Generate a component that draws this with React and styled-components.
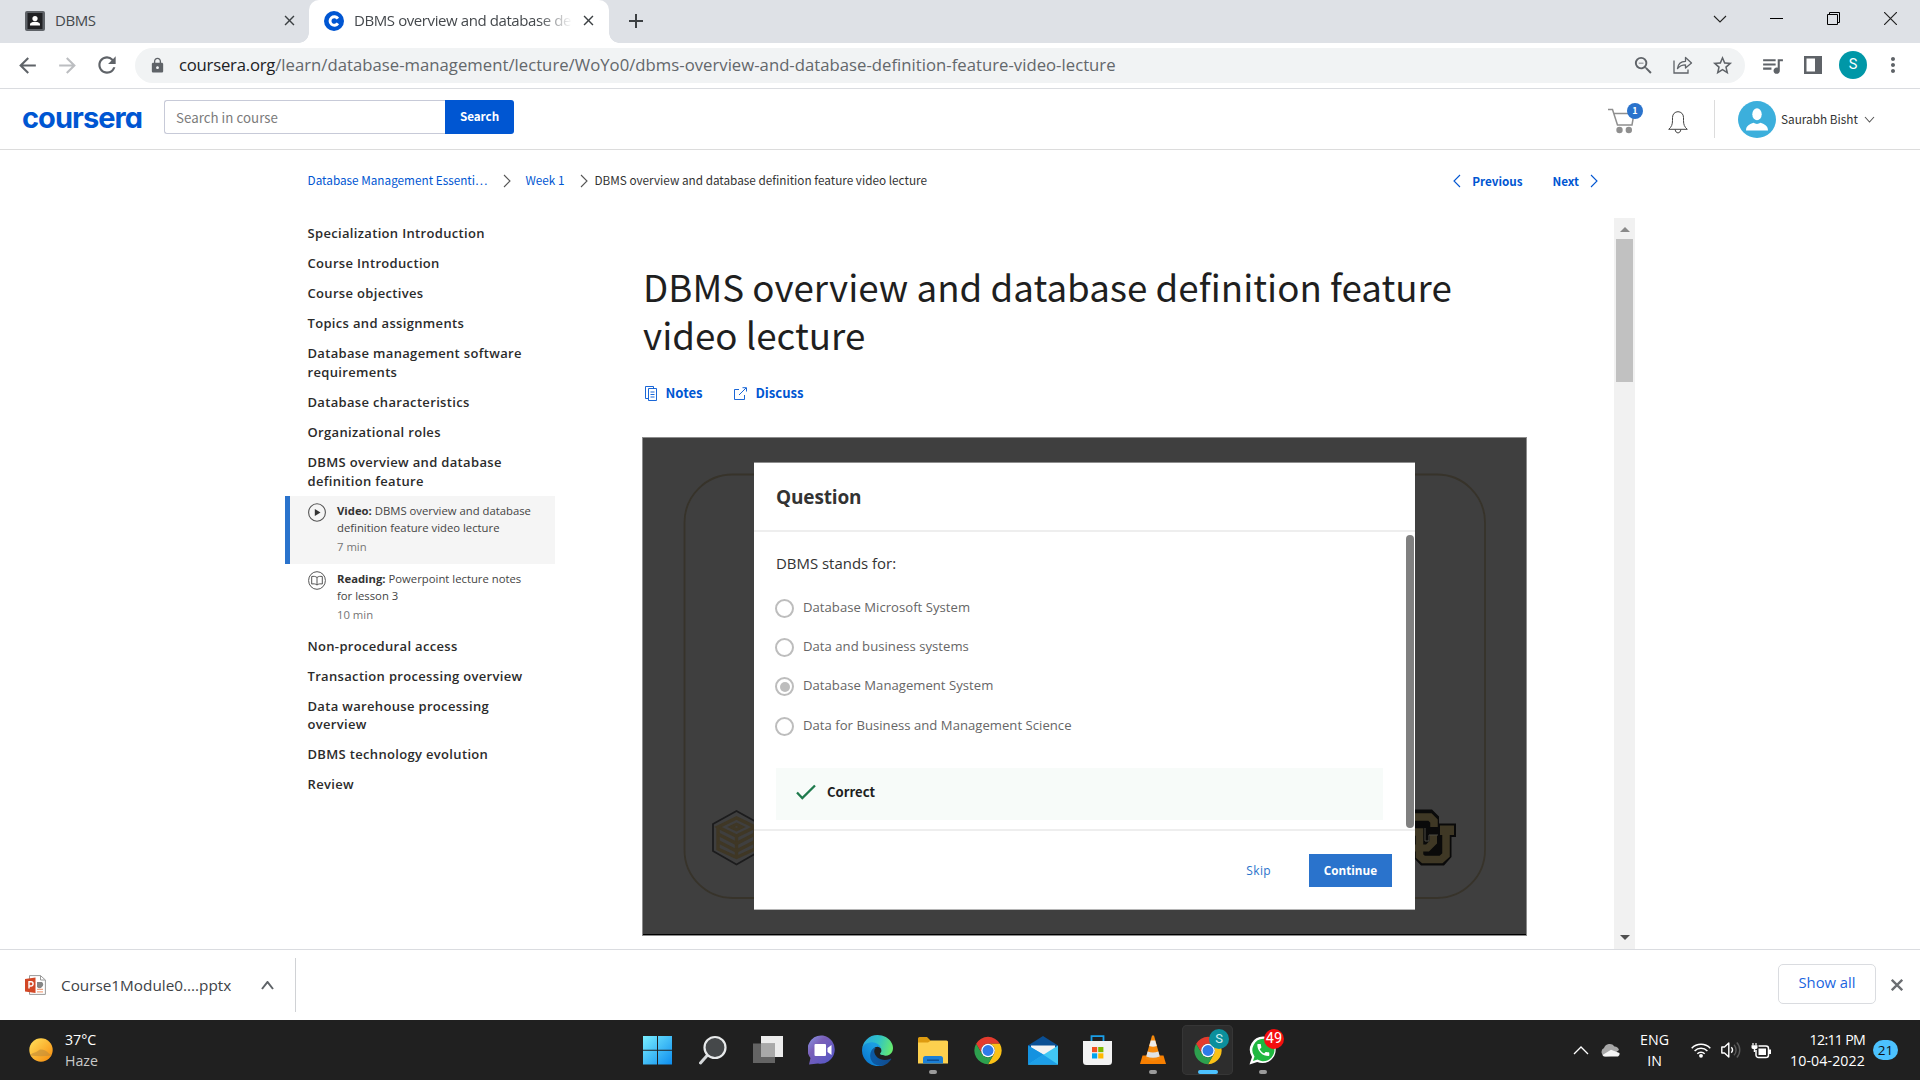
import React from "react";
import styled, { createGlobalStyle, css } from "styled-components";
import {
  MdArrowBack, MdArrowForward, MdRefresh, MdLock, MdClose, MdAdd, MdStarBorder, MdZoomOut,
  MdQueueMusic, MdMoreVert, MdPhone,
} from "react-icons/md";

const OPEN = '"Open Sans", "Noto Sans", sans-serif';
const SOURCE = '"Noto Sans CJK SC", "Open Sans", sans-serif';
const BLUE = "#0056d2";

const type = (size, line, weight = 400, family = OPEN, spacing = 0) => css`
  font: ${weight} ${size}px/${line}px ${family};
  letter-spacing: ${spacing}px;
  white-space: nowrap;
`;

const GlobalStyle = createGlobalStyle`
  *, *::before, *::after { box-sizing: border-box; }
  html, body { margin: 0; height: 100%; overflow: hidden; background: #fff; }
  svg { display: block; flex: none; }
`;

const Screen = styled.div`
  display: flex;
  flex-direction: column;
  width: 1920px;
  height: 1080px;
  background: #fff;
  font-family: ${OPEN};
`;

/* ---------- browser chrome ---------- */

const TabStrip = styled.div`
  display: flex;
  flex: none;
  height: 43px;
  background: #dee1e6;
`;
const Tab = styled.div`
  display: flex;
  align-items: center;
  flex: none;
  width: ${(p) => p.$width}px;
  padding: 0 ${(p) => p.$right}px 2px ${(p) => p.$left}px;
  position: relative;
  ${(p) =>
    p.$active &&
    css`
      background: #fff;
      border-radius: 10px 10px 0 0;
      &::before,
      &::after {
        content: "";
        position: absolute;
        bottom: 0;
        width: 10px;
        height: 10px;
      }
      &::before {
        left: -10px;
        background: radial-gradient(circle at 0 0, transparent 9.5px, #fff 10px);
      }
      &::after {
        right: -10px;
        background: radial-gradient(circle at 100% 0, transparent 9.5px, #fff 10px);
      }
    `}
`;
const TabTitle = styled.span`
  ${type(15, 20, 400, OPEN, -0.41)}
  flex: 1;
  min-width: 0;
  margin: -1px 0 0 10px;
  overflow: hidden;
  color: #45494d;
  ${(p) => p.$fade && css`
    mask-image: linear-gradient(90deg, #000 185px, transparent 218px);
  `}
`;
const NewTab = styled.div`
  display: flex;
  align-items: center;
  padding: 0 0 1px 15px;
`;
const WindowControls = styled.div`
  display: flex;
  align-items: center;
  margin: 0 1px 0 auto;
  height: 37px;
`;
const WindowButton = styled.div`
  display: grid;
  place-items: center;
  width: 57px;
  height: 37px;
`;

const Toolbar = styled.div`
  display: flex;
  align-items: center;
  flex: none;
  height: 46px;
  padding: 0 15px 1px 7px;
  border-bottom: 1px solid #dadce0;
  color: #5f6368;
`;
const NavButton = styled.div`
  display: grid;
  place-items: center;
  flex: none;
  width: 40px;
  margin-left: ${(p) => p.$offset || 0}px;
  color: ${(p) => (p.$dim ? "#bcbec1" : "#5f6368")};
`;
const Omnibox = styled.div`
  display: flex;
  align-items: center;
  flex: none;
  width: 1610px;
  height: 35px;
  margin-left: 8px;
  padding: 0 11px 0 14px;
  border-radius: 18px;
  background: #f1f3f4;
`;
const Url = styled.span`
  ${type(16.7, 24, 400, OPEN, 0.02)}
  flex: 1;
  margin-left: 13px;
  color: #63676b;
`;
const UrlHost = styled.span`
  letter-spacing: -0.22px;
  color: #202124;
`;
const OmniActions = styled.div`
  display: flex;
  align-items: center;
  gap: 18px;
`;
const ToolbarActions = styled.div`
  display: flex;
  align-items: center;
  margin-left: 15px;
`;
const ProfileBadge = styled.div`
  ${type(14.5, 28, 400, "Roboto, sans-serif")}
  width: 28px;
  height: 28px;
  margin: 0 14px 0 6px;
  border-radius: 50%;
  background: #0097a7;
  color: #fff;
  text-align: center;
`;

/* ---------- site header ---------- */

const SiteHeader = styled.header`
  display: flex;
  flex: none;
  height: 61px;
  padding: 11px 45px 0 22px;
  border-bottom: 1px solid #dcdcdc;
`;
const Logo = styled.div`
  ${type(29, 34, 700, "Inter, sans-serif", -0.95)}
  font-feature-settings: "cv11";
  width: 142px;
  margin-top: 1px;
  color: ${BLUE};
`;
const SearchForm = styled.div`
  display: flex;
  width: 350px;
  height: 34px;
`;
const SearchField = styled.div`
  ${type(13.3, 34, 400, SOURCE, 0.03)}
  width: 281px;
  padding-left: 11px;
  border: 1px solid #c7cad8;
  border-right: 0;
  border-radius: 3px 0 0 3px;
  color: #7b7b7b;
`;
const SearchButton = styled.div`
  ${type(11.7, 31, 700, SOURCE, -0.05)}
  width: 69px;
  border-radius: 0 3px 3px 0;
  background: ${BLUE};
  color: #fff;
  text-align: center;
`;
const HeaderActions = styled.div`
  display: flex;
  align-items: flex-start;
  margin-left: auto;
`;
const CartButton = styled.div`
  position: relative;
  width: 60px;
  padding-top: 8px;
`;
const CartCount = styled.span`
  ${type(9, 16, 700, SOURCE)}
  position: absolute;
  left: 19px;
  top: 3px;
  width: 16px;
  height: 16px;
  border-radius: 50%;
  background: #2a73cc;
  color: #fff;
  text-align: center;
`;
const BellButton = styled.div`
  width: 46px;
  padding-top: 11px;
`;
const Account = styled.div`
  display: flex;
  align-items: center;
  height: 38px;
  padding-left: 23px;
  border-left: 1px solid #dcdcdc;
`;
const AccountName = styled.span`
  ${type(11.8, 20, 400, SOURCE)}
  width: 83px;
  margin: -1px 0 0 5px;
  color: #333;
`;

/* ---------- lecture page ---------- */

const PageBody = styled.div`
  display: flex;
  flex-direction: column;
  flex: none;
  height: 799px;
`;
const CrumbBar = styled.nav`
  display: flex;
  align-items: center;
  flex: none;
  height: 68px;
  padding: 0 322px 6px 307.6px;
`;
const Crumb = styled.span`
  ${type(11.75, 20, 400, SOURCE)}
  margin: -2px ${(p) => p.$gap || 0}px 0 ${(p) => p.$before || 0}px;
  color: ${(p) => (p.$link ? BLUE : "#333")};
`;
const StepLink = styled.span`
  ${type(11.7, 20, 700, SOURCE)}
  display: flex;
  align-items: center;
  gap: ${(p) => p.$gap}px;
  margin-left: ${(p) => p.$before};
  color: ${BLUE};
`;
const Columns = styled.div`
  display: flex;
  flex: 1;
  min-height: 0;
`;
const Sidebar = styled.aside`
  width: 270px;
  margin-left: 285px;
`;
const Section = styled.div`
  ${type(13, 19, 600, OPEN, 0.33)}
  line-height: ${(p) => p.$line}px;
  padding: ${(p) => (30 - p.$line) / 2}px 0 ${(p) => (30 - p.$line) / 2}px 22.5px;
  color: #2b2b2b;
`;
const Lesson = styled.div`
  display: flex;
  height: 67.5px;
  padding: 7px 0 0 17.5px;
  border-left: 5px solid ${(p) => (p.$active ? "#2a73cc" : "transparent")};
  background: ${(p) => (p.$active ? "#f5f5f5" : "transparent")};
`;
const LessonText = styled.div`
  ${type(11.3, 17, 400, OPEN)}
  margin: -1px 0 0 11.5px;
  color: #444;
  b {
    font-weight: 700;
    color: #333;
  }
`;
const Duration = styled.div`
  margin-top: 2px;
  color: #757575;
`;
const Content = styled.main`
  display: flex;
  flex-direction: column;
  width: 885px;
  margin-left: 87px;
  padding-top: 44px;
`;
const Title = styled.h1`
  ${type(36.73, 48, 400, SOURCE)}
  margin: 0 0 0 1px;
  height: 96px;
  color: #1f1f1f;
`;
const LectureActions = styled.div`
  display: flex;
  align-items: center;
  height: 24px;
  margin: 23px 0 0 2.5px;
`;
const ActionLink = styled.div`
  ${type(13.1, 20, 700, SOURCE)}
  display: flex;
  align-items: center;
  gap: 9px;
  width: 89px;
  color: ${BLUE};
`;
const Player = styled.div`
  display: grid;
  grid-template: 499px / 885px;
  margin-top: 32px;
`;
const Slide = styled.div`
  grid-area: 1 / 1;
  border: 1px solid #8c8c8c;
  background: #3f3f3f;
`;
const Modal = styled.section`
  display: flex;
  flex-direction: column;
  grid-area: 1 / 1;
  z-index: 1;
  align-self: start;
  justify-self: start;
  width: 661px;
  height: 448px;
  margin: 25px 0 0 112px;
  border-top: 1px solid #8e8e8e;
  border-bottom: 1px solid #b5b5b5;
  background: #fff;
`;
const ModalHeader = styled.div`
  ${type(19, 26, 700, OPEN, -0.15)}
  flex: none;
  height: 69px;
  padding: 21px 0 0 22px;
  border-bottom: 2px solid #eee;
  color: #333;
`;
const ModalBody = styled.div`
  display: flex;
  flex: none;
  height: 297px;
`;
const Quiz = styled.div`
  width: 607px;
  margin-left: 22px;
`;
const Prompt = styled.div`
  ${type(14.95, 22, 400, OPEN)}
  padding-top: 20px;
  height: 56px;
  color: #333;
`;
const Option = styled.label`
  ${type(13.1, 20, 400, OPEN, 0.03)}
  display: flex;
  align-items: center;
  height: 39.4px;
  gap: 9px;
  margin-left: -1px;
  padding-bottom: 2px;
  color: #666;
`;
const Radio = styled.span`
  display: grid;
  place-items: center;
  flex: none;
  width: 19px;
  height: 19px;
  margin-top: 3px;
  border: 2px solid #bdbdbd;
  border-radius: 50%;
  &::after {
    content: "";
    width: 10px;
    height: 10px;
    border-radius: 50%;
    background: ${(p) => (p.$checked ? "#bdbdbd" : "transparent")};
  }
`;
const Feedback = styled.div`
  ${type(13.1, 20, 700, SOURCE)}
  display: flex;
  align-items: center;
  height: 52px;
  margin-top: 22.5px;
  padding: 0 0 4px 20px;
  gap: 11px;
  background: #f7fbf9;
  color: #1f1f1f;
`;
const ModalScroll = styled.div`
  width: 8px;
  height: 293px;
  margin: 3px 0 0 23px;
  border-radius: 4px;
  background: #808080;
`;
const ModalFooter = styled.div`
  display: flex;
  align-items: center;
  justify-content: flex-end;
  flex: 1;
  padding: 1px 23px 0 0;
  border-top: 2px solid #eee;
`;
const SkipButton = styled.span`
  ${type(12, 20, 400, OPEN, 0.35)}
  margin-right: 38px;
  color: #2a73cc;
`;
const ContinueButton = styled.span`
  ${type(11.7, 32, 700, OPEN)}
  width: 83px;
  height: 33px;
  background: #2a73cc;
  color: #fff;
  text-align: center;
`;
const ScrollTrack = styled.div`
  display: flex;
  flex-direction: column;
  align-items: center;
  width: 21px;
  margin-left: 87px;
  padding: 9px 0 9px;
  background: #f1f1f1;
`;
const ScrollThumb = styled.div`
  width: 17px;
  height: 143px;
  margin: 7px 0 auto;
  background: #c1c1c1;
`;

/* ---------- downloads and taskbar ---------- */

const Downloads = styled.div`
  display: flex;
  align-items: center;
  flex: none;
  height: 71px;
  padding: 0 17px 0 25px;
  border-top: 1px solid #dadce0;
`;
const DownloadItem = styled.div`
  display: flex;
  align-items: center;
  width: 271px;
  height: 54px;
  border-right: 1px solid #d0d2d5;
`;
const FileName = styled.span`
  ${type(15.3, 24, 400, OPEN)}
  width: 200px;
  margin: -1px 0 0 15px;
  color: #404347;
`;
const ShowAll = styled.div`
  ${type(14.8, 35, 400, OPEN)}
  width: 98px;
  height: 40px;
  margin: 0 15px 2px auto;
  border: 1px solid #dadce0;
  border-radius: 5px;
  color: #1a66e0;
  text-align: center;
`;
const Taskbar = styled.div`
  display: grid;
  grid-template-columns: 630px 661px 1fr;
  flex: none;
  height: 60px;
  background: #202020;
  color: #fff;
`;
const Weather = styled.div`
  display: flex;
  align-items: center;
  padding-left: 28px;
  gap: 11px;
`;
const TaskLabel = styled.div`
  ${type(14.2, 20.5, 400, OPEN)}
  text-align: ${(p) => p.$align || "left"};
  margin-top: 1px;
`;
const Condition = styled.div`
  color: #c9c9c9;
`;
const AppRow = styled.div`
  display: flex;
`;
const AppSlot = styled.div`
  display: flex;
  flex-direction: column;
  align-items: center;
  position: relative;
  width: 51px;
  height: 50px;
  margin: 5px 2px 0;
  padding-top: ${(p) => p.$top || 10}px;
  border-radius: 5px;
  ${(p) => p.$active && css`
    background: #2d2d2d;
    box-shadow: inset 0 0 0 1px #363636;
  `}
  &::after {
    content: "";
    position: absolute;
    bottom: 1px;
    width: ${(p) => (p.$active ? 20 : 8)}px;
    height: 4px;
    border-radius: 2px;
    background: ${(p) => (p.$active ? "#4cc2ff" : p.$open ? "#9a9a9a" : "transparent")};
  }
`;
const AppBadge = styled.span`
  ${type(13, 20, 400, "Roboto, sans-serif")}
  position: absolute;
  left: 27px;
  top: 4px;
  width: 20px;
  height: 20px;
  border-radius: 50%;
  background: ${(p) => p.$color};
  color: ${(p) => p.$ink || "#fff"};
  text-align: center;
`;
const WideBadge = styled(AppBadge)`
  font-size: 14.5px;
`;
const Tray = styled.div`
  display: flex;
  align-items: center;
  justify-content: flex-end;
  padding-right: 22px;
`;
const TrayGroup = styled.div`
  display: flex;
  align-items: center;
  gap: ${(p) => p.$gap}px;
  margin-right: ${(p) => p.$after}px;
`;
const Clock = styled(TaskLabel)`
  margin-right: 8px;
  text-align: right;
`;
const ClockTime = styled.div`
  letter-spacing: -0.72px;
`;
const ClockDate = styled.div`
  letter-spacing: 0.1px;
`;
const Notices = styled.div`
  ${type(13.5, 20, 400, OPEN)}
  width: 25px;
  height: 20px;
  border-radius: 10px;
  background: #4cc2ff;
  color: #111;
  text-align: center;
`;

/* ---------- drawings ---------- */

const Chevron = ({ w = 8, h = 14, dir = "right", color = "#555", stroke = 1.1 }) => {
  const d = {
    right: `M1 1L${w - 1} ${h / 2}L1 ${h - 1}`,
    left: `M${w - 1} 1L1 ${h / 2}L${w - 1} ${h - 1}`,
    down: `M1 1L${w / 2} ${h - 1}L${w - 1} 1`,
    up: `M1 ${h - 1}L${w / 2} 1L${w - 1} ${h - 1}`,
  }[dir];
  return (
    <svg width={w} height={h} fill="none" stroke={color} strokeWidth={stroke}><path d={d} /></svg>
  );
};

const ContactIcon = () => (
  <svg width="20" height="20" viewBox="0 0 20 20">
    <rect width="20" height="20" rx="2" fill="#5f6368" />
    <rect x="2.5" y="2" width="15" height="16" fill="#202124" />
    <circle cx="10" cy="7.5" r="2.6" fill="#fff" />
    <path d="M5 14.5v-1.2c0-1.800 3-2.600 5-2.600s5 .8 5 2.600v1.200z" fill="#fff" />
  </svg>
);
const CourseraMark = () => (
  <svg width="20" height="20" viewBox="0 0 20 20">
    <circle cx="10" cy="10" r="10" fill={BLUE} />
    <path d="M13.900 7.600A4.300 4.300 0 1 0 13.900 12.400" fill="none" stroke="#fff" strokeWidth="2.900" />
  </svg>
);
const ShareIcon = () => (
  <svg width="20" height="18" viewBox="0 0 20 18" fill="none" stroke="#5f6368" strokeWidth="1.300">
    <path d="M1 4.500V17H15V13.500" />
    <path d="M4.500 12.500C5 8 8 5.500 12.500 5.300V1.500L18.500 7L12.500 12V8.800C9 8.800 6.500 10 4.500 12.500Z" strokeLinejoin="round" />
  </svg>
);
const SidePanelIcon = () => (
  <svg width="18" height="18"><path d="M1.250 1.250H16.750V16.750H1.250Z" fill="none" stroke="#5f6368" strokeWidth="2.500" /><path d="M11 0h7v18h-7z" fill="#5f6368" /></svg>
);
const CartIcon = () => (
  <svg width="27" height="26" viewBox="0 0 27 26" fill="none" stroke="#8f8f8f" strokeWidth="1.500">
    <path d="M0 1.500H4.500L9.500 17H24L26 5.500H6" />
    <circle cx="11.500" cy="22" r="3.200" fill="#8f8f8f" stroke="none" />
    <circle cx="20.800" cy="22" r="3.200" fill="#8f8f8f" stroke="none" />
  </svg>
);
const BellIcon = () => (
  <svg width="20" height="23" viewBox="0 0 20 23" fill="none" stroke="#444" strokeWidth="1">
    <path d="M.700 18.300C3.500 16 4.500 13.500 4.500 9.500V6.500C4.500 3 7 .700 10 .700S15.500 3 15.500 6.500V9.500C15.500 13.500 16.500 16 19.300 18.300Z" strokeLinejoin="round" />
    <path d="M7.200 18.500C7.500 23 12.500 23 12.800 18.500" />
  </svg>
);
const Avatar = () => (
  <svg width="38" height="37" viewBox="0 0 38 37">
    <ellipse cx="19" cy="18.500" rx="19" ry="18.500" fill="#3cafdc" />
    <ellipse cx="19" cy="13.200" rx="4.700" ry="6" fill="#fff" />
    <path d="M8 29.500C8 24.500 12 23 15.500 21.800C17.500 23.300 20.500 23.300 22.500 21.800C26 23 30 24.500 30 29.500Z" fill="#fff" />
  </svg>
);
const PlayIcon = () => (
  <svg width="18" height="19" viewBox="0 0 18 19"><ellipse cx="9" cy="9.500" rx="8.400" ry="8.800" fill="none" stroke="#555" strokeWidth="1.100" /><path d="M6.800 6L12.500 9.500L6.800 13Z" fill="#333" /></svg>
);
const BookIcon = () => (
  <svg width="18" height="19" viewBox="0 0 18 19" fill="none" stroke="#555" strokeWidth="1">
    <ellipse cx="9" cy="9.500" rx="8.400" ry="8.800" />
    <path d="M9 6.500C7.500 5.200 5.500 5.200 3.700 5.500V13C5.500 12.700 7.500 12.700 9 14C10.500 12.700 12.500 12.700 14.300 13V5.500C12.500 5.200 10.500 5.200 9 6.500ZM9 6.500V14" />
  </svg>
);
const NotesIcon = () => (
  <svg width="12" height="15" viewBox="0 0 12 15" fill="none" stroke={BLUE} strokeWidth=".9">
    <path d="M3 12.500H.500V.500H8.500V2.500M3.500 2.500H11.500V14.500H3.500ZM5.500 6H9.500M5.500 8.500H9.500M5.500 11H9.500" />
  </svg>
);
const DiscussIcon = () => (
  <svg width="13" height="13" viewBox="0 0 13 13" fill="none" stroke={BLUE} strokeWidth=".9">
    <path d="M5 2.500H.500V12.500H10.500V8M5 8L12 1M8.500 .700H12.500V4.500" />
  </svg>
);
const SlideArt = () => (
  <svg width="883" height="497" viewBox="643 438 883 497">
    <rect x="684.500" y="474.500" width="800.500" height="423.500" rx="48" fill="none" stroke="#37332a" strokeWidth="1.800" />
    <path d="M736.500 811L760 824V851L736.500 864.500L713 851V824Z" fill="none" stroke="#1c1c1d" strokeWidth="1.800" />
    <g stroke="#3f3725" strokeWidth="3.400" fill="none">
      <path d="M718 827L736.500 818L755 827L736.500 836Z" />
      <path d="M718 827V849L736.500 857.500L755 849V827M736.500 836V857" />
      <path d="M718 834L736.500 843.500L755 834M718 841.500L736.500 851L755 841.500" />
      <path d="M731 827L736.500 824.300L742 827L736.500 829.700Z" />
    </g>
    <path d="M1400 809.500H1432L1439 816.500V823.500H1456V837H1451.500V857L1444 865.500H1421L1413 857Z" fill="#0a0a0a" />
    <path d="M1400 817H1430L1434 821V827" fill="none" stroke="#3f3825" strokeWidth="7.500" />
    <path d="M1410 832H1419.500V856L1423.500 859.500H1441L1446 855V829" fill="none" stroke="#3f3825" strokeWidth="7.500" />
    <path d="M1440 825.500H1454V835H1440Z" fill="#3f3825" />
    <path d="M1433.500 835V842L1427.500 848H1415" fill="none" stroke="#3f3825" strokeWidth="7" />
    <path d="M1425 828V841H1429V835H1438" fill="none" stroke="#4c4a42" strokeWidth="1" />
    <path d="M643 934.500H1526" stroke="#000" />
  </svg>
);
const CheckIcon = () => (
  <svg width="20" height="16" viewBox="0 0 20 16" fill="none" stroke="#1f7a4d" strokeWidth="2.300"><path d="M1 8.500L6.300 14L19 1.500" /></svg>
);
const PptIcon = () => (
  <svg width="21" height="20" viewBox="0 0 21 20">
    <path d="M4.500 .600H15.500L20.400 5V19.400H4.500Z" fill="#fff" stroke="#9a9a9a" />
    <path d="M15.500 .600V5H20.400" fill="none" stroke="#9a9a9a" />
    <path d="M12 7h5a3.500 3.500 0 0 1-5 5z" fill="#858585" />
    <path d="M12 14.300h6M12 16.800h6" stroke="#f2a584" strokeWidth="1.300" />
    <path d="M0 4L10.500 2.500V18L0 16.500Z" fill="#d24726" />
    <path d="M4 13.500V6.800H6a2 2 0 0 1 0 4.200H4" fill="none" stroke="#fff" strokeWidth="1.400" />
  </svg>
);
const SunIcon = () => (
  <svg width="26" height="26" viewBox="0 0 26 26">
    <defs>
      <linearGradient id="sun" x1="0" y1="0" x2="1" y2="1"><stop offset="0" stopColor="#ffe25c" /><stop offset="1" stopColor="#f78a0c" /></linearGradient>
    </defs>
    <circle cx="13" cy="13" r="11.700" fill="url(#sun)" />
    <path d="M4 16.500Q9 15 12 12.500Q17 12 21 16.500L24 18.500Q13 20 2 18.500Z" fill="#c08c3a" opacity=".6" />
  </svg>
);

const WindowsIcon = () => (
  <svg width="29" height="30" viewBox="0 0 29 30">
    <defs><linearGradient id="win" x1="0" y1="0" x2="1" y2="1" gradientUnits="objectBoundingBox"><stop offset="0" stopColor="#79eeff" /><stop offset="1" stopColor="#0d8dee" /></linearGradient></defs>
    <path d="M0 1h14v13.700H0zM15 1h14v13.700H15zM0 15.700h14V29.500H0zM15 15.700h14V29.500H15z" fill="url(#win)" />
  </svg>
);
const SearchTaskIcon = () => (
  <svg width="28" height="30" viewBox="0 0 28 30">
    <path d="M1.500 28L9 19.500" stroke="#d5d8da" strokeWidth="3" strokeLinecap="round" />
    <circle cx="16" cy="12.500" r="10.500" fill="#45484a" stroke="#e8eaeb" strokeWidth="2.200" />
  </svg>
);
const TaskViewIcon = () => (
  <svg width="30" height="30" viewBox="0 0 30 30">
    <path d="M8 1h22v21H8z" fill="#ececec" />
    <path d="M0 8.500h22V28H0z" fill="#6a6a6a" opacity=".92" />
    <path d="M8 8.500h14V22H8z" fill="#a9a9a9" />
  </svg>
);
const ChatIcon = () => (
  <svg width="29" height="30" viewBox="-1 0 29 30">
    <defs><linearGradient id="chat" x1="0" y1="0" x2="1" y2="1"><stop offset="0" stopColor="#8a9be8" /><stop offset=".35" stopColor="#7a5fb8" /><stop offset="1" stopColor="#4f55c8" /></linearGradient></defs>
    <path d="M14 .500A14 14 0 1 1 9 28.500L0 29.500L1.500 23A14 14 0 0 1 14 .500Z" fill="url(#chat)" />
    <rect x="5.500" y="9" width="11.500" height="12" rx="1" fill="#fff" />
    <path d="M18.500 13L22.500 10V20L18.500 17Z" fill="#fff" />
  </svg>
);
const EdgeIcon = () => (
  <svg width="31" height="31" viewBox="0 0 256 256">
    <defs>
      <linearGradient id="ea" x1=".2" y1=".7" x2="1" y2=".7"><stop offset="0" stopColor="#0c59a4" /><stop offset="1" stopColor="#114a8b" /></linearGradient>
      <linearGradient id="eb" x1=".7" y1=".3" x2=".2" y2=".9"><stop offset="0" stopColor="#1b9de2" /><stop offset="1" stopColor="#0a78d0" /></linearGradient>
      <linearGradient id="ec" x1="0" y1=".3" x2="1" y2=".5"><stop offset="0" stopColor="#2aa8e0" /><stop offset=".5" stopColor="#2fc2c8" /><stop offset="1" stopColor="#66eb6e" /></linearGradient>
    </defs>
    <path fill="url(#ea)" d="M235.680 195.460a93.730 93.730 0 0 1-10.540 4.710 101.870 101.870 0 0 1-35.900 6.460c-47.320 0-88.540-32.550-88.540-74.320A31.480 31.480 0 0 1 117.130 105c-42.800 1.800-53.800 46.400-53.800 72.530 0 73.880 68.090 81.370 82.760 81.370 7.910 0 19.840-2.300 27-4.560l1.310-.440a128.340 128.340 0 0 0 66.600-52.800 4 4 0 0 0-5.320-5.640z" />
    <path fill="url(#eb)" d="M105.730 241.420A79.200 79.200 0 0 1 83 220.120a80.720 80.720 0 0 1 29.500-120c3.120-1.470 8.450-4.130 15.540-4a32.350 32.350 0 0 1 25.690 13 31.880 31.880 0 0 1 6.360 18.660c0-.210 24.460-79.600-80-79.600-43.900 0-80 41.660-80 78.210a130.150 130.150 0 0 0 12.110 56 128 128 0 0 0 156.380 67.110 75.550 75.550 0 0 1-62.780-8z" />
    <path fill="url(#ec)" d="M152.330 148.860c-.810 1.050-3.300 2.500-3.300 5.660 0 2.610 1.700 5.120 4.720 7.230 14.380 10 41.490 8.680 41.560 8.680a59.560 59.560 0 0 0 30.270-8.350A61.380 61.380 0 0 0 256 109.400c.260-22.410-8-37.310-11.340-43.910C223.460 24.050 177.700.250 128 .250a128 128 0 0 0-128 126.200c.480-36.540 36.800-66.050 80-66.050 3.500 0 23.460.340 42 10.070 16.340 8.580 24.900 18.940 30.850 29.210 6.180 10.670 7.280 24.150 7.280 29.520s-2.740 13.330-7.800 19.660z" />
  </svg>
);
const FolderIcon = () => (
  <svg width="30" height="30" viewBox="0 0 30 30">
    <path d="M0 3.500A1.500 1.500 0 0 1 1.500 2H9L13 6H28.500A1.500 1.500 0 0 1 30 7.500V12H0Z" fill="#dd9b10" />
    <path d="M0 7.500H10L13 5.500H28.500A1.500 1.500 0 0 1 30 7V28.500H0Z" fill="#fdd04e" />
    <path d="M5 28.500V23.500A2.500 2.500 0 0 1 7.500 21H22.500A2.500 2.500 0 0 1 25 23.500V28.500Z" fill="#1b7fd6" />
    <path d="M9 25.200H21" stroke="#0c4f94" strokeWidth="1.500" />
  </svg>
);
const ChromeIcon = () => (
  <svg width="28" height="29" viewBox="1.500 1.500 45 45">
    <path fill="#e33b2e" d="M24 13H43.050A22 22 0 0 0 4.950 13L14.470 29.500A11 11 0 0 1 24 13Z" />
    <path fill="#fbc116" d="M33.530 29.500L24 46A22 22 0 0 0 43.050 13H24A11 11 0 0 1 33.530 29.500Z" />
    <path fill="#2da04e" d="M14.470 29.500L4.950 13A22 22 0 0 0 24 46L33.530 29.500A11 11 0 0 1 14.470 29.500Z" />
    <circle cx="24" cy="24" r="11" fill="#fff" />
    <circle cx="24" cy="24" r="8.800" fill="#2f7bea" />
  </svg>
);
const MailIcon = () => (
  <svg width="30" height="30" viewBox="0 0 30 30">
    <path d="M0 10.500L15 1L30 10.500V14H0Z" fill="#0a4f94" />
    <path d="M3 10.500H27V22H3Z" fill="#f3f3f3" />
    <path d="M0 10.500L30 28V29.500H0Z" fill="#1a9be6" />
    <path d="M30 10.500L0 29.500H30Z" fill="#41c8f4" />
    <path d="M0 10.500L15 19.500L0 29.500Z" fill="#1492e0" />
    <path d="M0 29.500L15 19.500L30 29.500Z" fill="#1d9fe8" />
  </svg>
);
const StoreIcon = () => (
  <svg width="29" height="31" viewBox="0 0 29 31">
    <path d="M8.500 7V1.200H20.500V7" fill="none" stroke="#1a9fe8" strokeWidth="1.800" />
    <path d="M0 6H29V26.500A3.500 3.500 0 0 1 25.500 30H3.500A3.500 3.500 0 0 1 0 26.500Z" fill="#f3f3f3" />
    <path d="M9 12h5.200v5.200H9z" fill="#f25022" /><path d="M15.200 12h5.200v5.200h-5.200z" fill="#7fba00" />
    <path d="M9 18.300h5.200v5.200H9z" fill="#00a4ef" /><path d="M15.200 18.300h5.200v5.200h-5.200z" fill="#ffb900" />
  </svg>
);
const VlcIcon = () => (
  <svg width="26" height="30" viewBox="0 0 26 30">
    <path d="M2.500 20.500H23.500L26 29H0Z" fill="#f77f00" />
    <path d="M12 .500H14L20.500 24Q13 27.500 5.500 24Z" fill="#f58a0e" />
    <path d="M10.800 5.500H15.200L16.800 11Q13 12.500 9.200 11Z" fill="#ececec" />
    <path d="M7.600 16.500Q13 18.500 18.400 16.500L19.700 21.500Q13 24 6.300 21.500Z" fill="#dfe3e6" />
  </svg>
);
const WhatsAppIcon = () => (
  <svg width="28" height="29" viewBox="0 0 28 29">
    <path d="M14.500 .500A13.300 13.300 0 1 1 8.200 26L.500 28.500L3 21A13.300 13.300 0 0 1 14.500 .500Z" fill="#fff" />
    <path d="M14.500 2.800A11.200 11.200 0 1 1 8.500 23.600L4 25L5.500 20.500A11.200 11.200 0 0 1 14.500 2.800Z" fill="#1fb83f" />
    <g transform="translate(6.300 6)"><MdPhone size={16} color="#fff" /></g>
  </svg>
);
const CloudIcon = () => (
  <svg width="20" height="14" viewBox="0 0 20 14">
    <path d="M5 13.500A4.500 4.500 0 0 1 3 5A6 6 0 0 1 13.500 3.500A4.800 4.800 0 0 1 18 7L10 13Z" fill="#a8a8a8" />
    <path d="M1.500 12L10 6.800L18.500 10A3 3 0 0 1 17 13.500H4Q2 13.500 1.500 12Z" fill="#f5f5f5" />
  </svg>
);
const WifiIcon = () => (
  <svg width="20" height="16" viewBox="0 0 20 16" fill="none" stroke="#fff" strokeWidth="1.500">
    <path d="M.700 6.200A13.200 13.200 0 0 1 19.300 6.200M3.600 9A9 9 0 0 1 16.400 9M6.300 11.700A5.200 5.200 0 0 1 13.700 11.700" />
    <circle cx="10" cy="13.800" r="1.900" fill="#fff" stroke="none" />
  </svg>
);
const SoundIcon = () => (
  <svg width="20" height="18" viewBox="0 0 20 18" fill="none" stroke="#fff" strokeWidth="1.400">
    <path d="M.800 6H3.500L7.800 2V16L3.500 12H.800Z" strokeLinejoin="round" />
    <path d="M10.300 6.300A4 4 0 0 1 10.300 11.700" />
    <path d="M13 3.800A7.500 7.500 0 0 1 13 14.200M15.800 1.500A11 11 0 0 1 15.800 16.500" stroke="#5a5a5a" />
  </svg>
);
const BatteryIcon = () => (
  <svg width="21" height="17" viewBox="0 0 21 17" fill="none" stroke="#fff" strokeWidth="1.500">
    <path d="M7.500 4H15A2.500 2.500 0 0 1 17.500 6.500V13A2.500 2.500 0 0 1 15 15.500H7.500A2.500 2.500 0 0 1 5 13V8" />
    <path d="M7.500 6.500H15V13H7.500Z" fill="#fff" stroke="none" />
    <path d="M18 7.500H20V12H18" fill="#fff" stroke="none" />
    <path d="M2 1V3.500M5 1V3.500" strokeWidth="1.200" />
    <path d="M.500 3.300H6.500V5.500Q6.500 7 3.500 7Q.500 7 .500 5.500Z" fill="#fff" stroke="none" />
    <path d="M3.500 6V10" />
  </svg>
);

/* ---------- content ---------- */

const before = [
  ["Specialization Introduction"], ["Course Introduction"], ["Course objectives"], ["Topics and assignments"],
  ["Database management software", "requirements"], ["Database characteristics"], ["Organizational roles"],
  ["DBMS overview and database", "definition feature"],
];
const after = [
  ["Non-procedural access"], ["Transaction processing overview"], ["Data warehouse processing", "overview"],
  ["DBMS technology evolution"], ["Review"],
];
const options = [
  "Database Microsoft System", "Data and business systems", "Database Management System",
  "Data for Business and Management Science",
];
const CHECKED = 2;

const Sections = ({ items, line }) =>
  items.map((lines) => (
    <Section key={lines[0]} $line={line}>
      {lines.map((text) => <div key={text}>{text}</div>)}
    </Section>
  ));

const apps = [
  { icon: <WindowsIcon /> },
  { icon: <SearchTaskIcon /> },
  { icon: <TaskViewIcon /> },
  { icon: <ChatIcon /> },
  { icon: <EdgeIcon /> },
  { icon: <FolderIcon />, open: true },
  { icon: <ChromeIcon />, top: 11 },
  { icon: <MailIcon /> },
  { icon: <StoreIcon /> },
  { icon: <VlcIcon />, open: true },
  { icon: <ChromeIcon />, top: 11, active: true, badge: <AppBadge $color="#0b8f9c" $ink="#cfeef0">S</AppBadge> },
  { icon: <WhatsAppIcon />, top: 11, open: true, badge: <WideBadge $color="#f50f0f">49</WideBadge> },
];

export default function App() {
  return (
    <Screen>
      <GlobalStyle />
      <TabStrip>
        <Tab $width={309} $left={25} $right={11}>
          <ContactIcon />
          <TabTitle>DBMS</TabTitle>
          <MdClose size={17} color="#3c4043" />
        </Tab>
        <Tab $active $width={300} $left={15} $right={12}>
          <CourseraMark />
          <TabTitle $fade>DBMS overview and database de</TabTitle>
          <MdClose size={17} color="#3c4043" />
        </Tab>
        <NewTab><MdAdd size={24} color="#3c4043" /></NewTab>
        <WindowControls>
          <WindowButton><Chevron dir="down" w={14} h={8} color="#222" /></WindowButton>
          <WindowButton><svg width="13" height="1"><path d="M0 .5H13" stroke="#000" /></svg></WindowButton>
          <WindowButton>
            <svg width="13" height="13" fill="none" stroke="#000"><path d="M.5 2.500H10.500V12.500H.5ZM2.500 2.500V.5H12.500V10.500H10.500" /></svg>
          </WindowButton>
          <WindowButton><svg width="13" height="13" stroke="#222" strokeWidth="1.200"><path d="M0 0L13 13M13 0L0 13" /></svg></WindowButton>
        </WindowControls>
      </TabStrip>

      <Toolbar>
        <NavButton><MdArrowBack size={25} /></NavButton>
        <NavButton $dim><MdArrowForward size={25} /></NavButton>
        <NavButton><MdRefresh size={26} /></NavButton>
        <Omnibox>
          <MdLock size={17} />
          <Url><UrlHost>coursera.org</UrlHost>/learn/database-management/lecture/WoYo0/dbms-overview-and-database-definition-feature-video-lecture</Url>
          <OmniActions>
            <MdZoomOut size={23} />
            <ShareIcon />
            <MdStarBorder size={23} />
          </OmniActions>
        </Omnibox>
        <ToolbarActions>
          <MdQueueMusic size={25} />
          <NavButton $offset={8}><SidePanelIcon /></NavButton>
          <ProfileBadge>S</ProfileBadge>
          <MdMoreVert size={24} />
        </ToolbarActions>
      </Toolbar>

      <SiteHeader>
        <Logo>coursera</Logo>
        <SearchForm>
          <SearchField>Search in course</SearchField>
          <SearchButton>Search</SearchButton>
        </SearchForm>
        <HeaderActions>
          <CartButton><CartIcon /><CartCount>1</CartCount></CartButton>
          <BellButton><BellIcon /></BellButton>
          <Account>
            <Avatar />
            <AccountName>Saurabh Bisht</AccountName>
            <Chevron dir="down" w={11} h={7} />
          </Account>
        </HeaderActions>
      </SiteHeader>

      <PageBody>
        <CrumbBar>
          <Crumb $link $gap={16}>Database Management Essenti…</Crumb>
          <Chevron />
          <Crumb $link $before={14} $gap={16}>Week 1</Crumb>
          <Chevron />
          <Crumb $before={6}>DBMS overview and database definition feature video lecture</Crumb>
          <StepLink $before="auto" $gap={11.5}><Chevron dir="left" color={BLUE} />Previous</StepLink>
          <StepLink $before="30px" $gap={11}>Next<Chevron color={BLUE} /></StepLink>
        </CrumbBar>
        <Columns>
          <Sidebar>
            <Sections items={before} line={19} />
            <Lesson $active>
              <PlayIcon />
              <LessonText>
                <div><b>Video:</b> DBMS overview and database</div>
                <div>definition feature video lecture</div>
                <Duration>7 min</Duration>
              </LessonText>
            </Lesson>
            <Lesson>
              <BookIcon />
              <LessonText>
                <div><b>Reading:</b> Powerpoint lecture notes</div>
                <div>for lesson 3</div>
                <Duration>10 min</Duration>
              </LessonText>
            </Lesson>
            <Sections items={after} line={18.4} />
          </Sidebar>
          <Content>
            <Title>DBMS overview and database definition feature<br />video lecture</Title>
            <LectureActions>
              <ActionLink><NotesIcon />Notes</ActionLink>
              <ActionLink><DiscussIcon />Discuss</ActionLink>
            </LectureActions>
            <Player>
              <Slide><SlideArt /></Slide>
              <Modal>
                <ModalHeader>Question</ModalHeader>
                <ModalBody>
                  <Quiz>
                    <Prompt>DBMS stands for:</Prompt>
                    {options.map((label, i) => (
                      <Option key={label}><Radio $checked={i === CHECKED} />{label}</Option>
                    ))}
                    <Feedback><CheckIcon />Correct</Feedback>
                  </Quiz>
                  <ModalScroll />
                </ModalBody>
                <ModalFooter>
                  <SkipButton>Skip</SkipButton>
                  <ContinueButton>Continue</ContinueButton>
                </ModalFooter>
              </Modal>
            </Player>
          </Content>
          <ScrollTrack>
            <svg width="10" height="5"><path d="M5 0L10 5H0Z" fill="#8a8a8a" /></svg>
            <ScrollThumb />
            <svg width="10" height="5"><path d="M0 0H10L5 5Z" fill="#505050" /></svg>
          </ScrollTrack>
        </Columns>
      </PageBody>

      <Downloads>
        <DownloadItem>
          <PptIcon />
          <FileName>Course1Module0....pptx</FileName>
          <Chevron dir="up" w={13} h={9} stroke={2} color="#5f6368" />
        </DownloadItem>
        <ShowAll>Show all</ShowAll>
        <svg width="12" height="12" stroke="#6b6e72" strokeWidth="2.300"><path d="M.8 .8L11.200 11.200M11.200 .8L.8 11.200" /></svg>
      </Downloads>

      <Taskbar>
        <Weather>
          <SunIcon />
          <TaskLabel><div>37°C</div><Condition>Haze</Condition></TaskLabel>
        </Weather>
        <AppRow>
          {apps.map((a, i) => (
            <AppSlot key={i} $top={a.top} $active={a.active} $open={a.open}>
              {a.icon}
              {a.badge}
            </AppSlot>
          ))}
        </AppRow>
        <Tray>
          <TrayGroup $gap={12} $after={19}>
            <Chevron dir="up" w={16} h={9} color="#fff" stroke={1.3} />
            <CloudIcon />
          </TrayGroup>
          <TrayGroup $gap={0} $after={22}>
            <TaskLabel $align="center"><div>ENG</div><div>IN</div></TaskLabel>
          </TrayGroup>
          <TrayGroup $gap={10} $after={18}>
            <WifiIcon /><SoundIcon /><BatteryIcon />
          </TrayGroup>
          <Clock><ClockTime>12:11 PM</ClockTime><ClockDate>10-04-2022</ClockDate></Clock>
          <Notices>21</Notices>
        </Tray>
      </Taskbar>
    </Screen>
  );
}
